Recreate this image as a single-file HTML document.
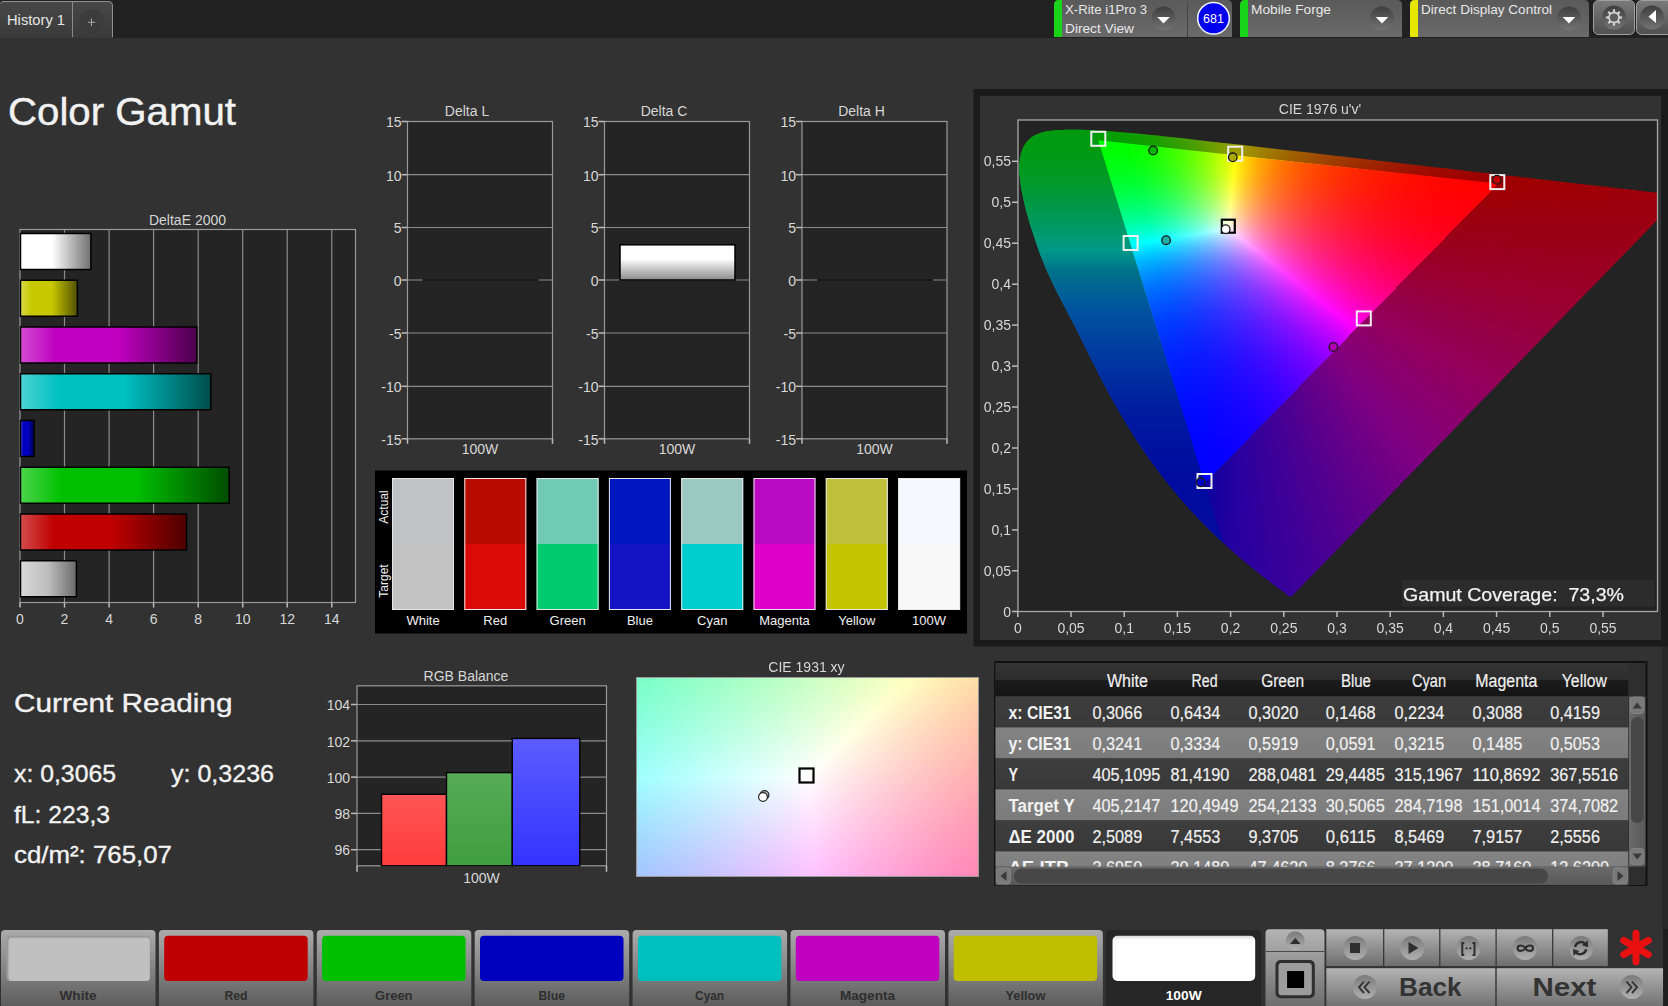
<!DOCTYPE html><html><head><meta charset="utf-8"><title>Color Gamut</title><style>html,body{margin:0;padding:0;width:1668px;height:1006px;overflow:hidden;background:#323232;font-family:"Liberation Sans",sans-serif}</style></head><body><svg width="1668" height="1006" viewBox="0 0 1668 1006" style="position:absolute;left:0;top:0;font-family:'Liberation Sans',sans-serif"><rect x="0" y="0" width="1668" height="38" fill="#212121"/><defs><linearGradient id="tabg" x1="0" y1="0" x2="0" y2="1"><stop offset="0" stop-color="#484848"/><stop offset="1" stop-color="#3a3a3a"/></linearGradient><linearGradient id="devg" x1="0" y1="0" x2="0" y2="1"><stop offset="0" stop-color="#5a5a5a"/><stop offset="1" stop-color="#6a6a6a"/></linearGradient><linearGradient id="ddg" x1="0" y1="0" x2="0" y2="1"><stop offset="0" stop-color="#3e3e3e"/><stop offset="1" stop-color="#747474"/></linearGradient><linearGradient id="btng" x1="0" y1="0" x2="0" y2="1"><stop offset="0" stop-color="#7a7a7a"/><stop offset="1" stop-color="#505050"/></linearGradient></defs><path d="M0,38 V3 L2,1 H108 Q113,1 113,6 V38 Z" fill="url(#tabg)"/><path d="M0.5,3 L2.5,1.5 H108 Q112.5,1.5 112.5,6 V37" fill="none" stroke="#909090" stroke-width="1"/><line x1="72.5" y1="2" x2="72.5" y2="37" stroke="#8a8a8a" stroke-width="1"/><text x="7" y="25" font-size="14" fill="#e6e6e6" text-anchor="start" font-weight="normal" textLength="58" lengthAdjust="spacingAndGlyphs" >History 1</text><circle cx="91.5" cy="21" r="12" fill="#3c3c3c"/><path d="M91.5,18.5 V26 M87.8,22.3 H95.2" stroke="#a8a8a8" stroke-width="1"/><path d="M1054,37 V5 Q1054,0 1059,0 H1227 Q1232,0 1232,5 V37 Z" fill="url(#devg)"/><path d="M1054,37 V5 Q1054,0 1059,0 H1062 V37 Z" fill="#19d419"/><text x="1065" y="14" font-size="13" fill="#e8e8e8" text-anchor="start" font-weight="normal" textLength="82" lengthAdjust="spacingAndGlyphs" >X-Rite i1Pro 3</text><text x="1065" y="33" font-size="13" fill="#e8e8e8" text-anchor="start" font-weight="normal" textLength="69" lengthAdjust="spacingAndGlyphs" >Direct View</text><circle cx="1163.5" cy="18.5" r="12" fill="url(#ddg)"/><path d="M1157.2,17 H1169.8 L1163.5,23.5 Z" fill="#ffffff"/><line x1="1187.5" y1="3" x2="1187.5" y2="37" stroke="#444" stroke-width="1"/><circle cx="1213.5" cy="18.3" r="15.8" fill="#0000ee" stroke="#f4f4ff" stroke-width="1.5"/><text x="1213.5" y="23" font-size="12.5" fill="#ffffff" text-anchor="middle" font-weight="normal" >681</text><path d="M1240,37 V5 Q1240,0 1245,0 H1397 Q1402,0 1402,5 V37 Z" fill="url(#devg)"/><path d="M1240,37 V5 Q1240,0 1245,0 H1248 V37 Z" fill="#19d419"/><text x="1251" y="14" font-size="13" fill="#e8e8e8" text-anchor="start" font-weight="normal" textLength="80" lengthAdjust="spacingAndGlyphs" >Mobile Forge</text><circle cx="1382" cy="18.5" r="12" fill="url(#ddg)"/><path d="M1375.7,17 H1388.3 L1382,23.5 Z" fill="#ffffff"/><path d="M1410,37 V5 Q1410,0 1415,0 H1584 Q1589,0 1589,5 V37 Z" fill="url(#devg)"/><path d="M1410,37 V5 Q1410,0 1415,0 H1418 V37 Z" fill="#e6e600"/><text x="1421" y="14" font-size="13" fill="#e8e8e8" text-anchor="start" font-weight="normal" textLength="131" lengthAdjust="spacingAndGlyphs" >Direct Display Control</text><circle cx="1569" cy="18.5" r="12" fill="url(#ddg)"/><path d="M1562.7,17 H1575.3 L1569,23.5 Z" fill="#ffffff"/><rect x="1593.5" y="0.5" width="41" height="34" rx="5" fill="url(#btng)" stroke="#a0a0a0"/><circle cx="1614" cy="17.5" r="12" fill="url(#ddg)"/><polygon points="1619.78,16.33 1622.13,16.44 1622.13,18.56 1619.78,18.67 1618.92,20.76 1620.50,22.50 1619.00,24.00 1617.26,22.42 1615.17,23.28 1615.06,25.63 1612.94,25.63 1612.83,23.28 1610.74,22.42 1609.00,24.00 1607.50,22.50 1609.08,20.76 1608.22,18.67 1605.87,18.56 1605.87,16.44 1608.22,16.33 1609.08,14.24 1607.50,12.50 1609.00,11.00 1610.74,12.58 1612.83,11.72 1612.94,9.37 1615.06,9.37 1615.17,11.72 1617.26,12.58 1619.00,11.00 1620.50,12.50 1618.92,14.24" fill="#d0d0d0"/><circle cx="1614" cy="17.5" r="4.1" fill="#5c5c5c"/><rect x="1636.5" y="0.5" width="40" height="34" rx="5" fill="url(#btng)" stroke="#a0a0a0"/><circle cx="1652" cy="17.5" r="12" fill="url(#ddg)"/><path d="M1648.5,16.8 L1656,10 V23 Z" fill="#ffffff"/><text x="8" y="124.7" font-size="38.5" fill="#f2f2f2" text-anchor="start" font-weight="normal" textLength="228" lengthAdjust="spacingAndGlyphs" stroke="#f2f2f2" stroke-width="0.4">Color Gamut</text><defs><linearGradient id="dew" x1="0" y1="0" x2="1" y2="0"><stop offset="0" stop-color="#ffffff"/><stop offset="0.45" stop-color="#ffffff"/><stop offset="1" stop-color="#707070"/></linearGradient><linearGradient id="dey" x1="0" y1="0" x2="1" y2="0"><stop offset="0" stop-color="#d8d84c"/><stop offset="0.2" stop-color="#c8c800"/><stop offset="0.55" stop-color="#c8c800"/><stop offset="1" stop-color="#505000"/></linearGradient><linearGradient id="dem" x1="0" y1="0" x2="1" y2="0"><stop offset="0" stop-color="#d34cd3"/><stop offset="0.2" stop-color="#c000c0"/><stop offset="0.55" stop-color="#c000c0"/><stop offset="1" stop-color="#4d004d"/></linearGradient><linearGradient id="dec" x1="0" y1="0" x2="1" y2="0"><stop offset="0" stop-color="#4cd3d3"/><stop offset="0.2" stop-color="#00c0c0"/><stop offset="0.55" stop-color="#00c0c0"/><stop offset="1" stop-color="#004d4d"/></linearGradient><linearGradient id="deb" x1="0" y1="0" x2="1" y2="0"><stop offset="0" stop-color="#4c4cd3"/><stop offset="0.2" stop-color="#0000c0"/><stop offset="0.55" stop-color="#0000c0"/><stop offset="1" stop-color="#00004d"/></linearGradient><linearGradient id="deg" x1="0" y1="0" x2="1" y2="0"><stop offset="0" stop-color="#4cd34c"/><stop offset="0.2" stop-color="#00c000"/><stop offset="0.55" stop-color="#00c000"/><stop offset="1" stop-color="#004d00"/></linearGradient><linearGradient id="der" x1="0" y1="0" x2="1" y2="0"><stop offset="0" stop-color="#d34c4c"/><stop offset="0.2" stop-color="#c00000"/><stop offset="0.55" stop-color="#c00000"/><stop offset="1" stop-color="#4d0000"/></linearGradient><linearGradient id="dewg" x1="0" y1="0" x2="1" y2="0"><stop offset="0" stop-color="#d8d8d8"/><stop offset="0.5" stop-color="#bdbdbd"/><stop offset="1" stop-color="#6a6a6a"/></linearGradient></defs><text x="187.5" y="225" font-size="14" fill="#d6d6d6" text-anchor="middle" font-weight="normal" >DeltaE 2000</text><rect x="20" y="229.5" width="335.5" height="373.0" fill="#242424" stroke="#999" stroke-width="1.2"/><line x1="64.5" y1="229.5" x2="64.5" y2="602.5" stroke="#8c8c8c" stroke-width="1.2"/><line x1="109.1" y1="229.5" x2="109.1" y2="602.5" stroke="#8c8c8c" stroke-width="1.2"/><line x1="153.6" y1="229.5" x2="153.6" y2="602.5" stroke="#8c8c8c" stroke-width="1.2"/><line x1="198.2" y1="229.5" x2="198.2" y2="602.5" stroke="#8c8c8c" stroke-width="1.2"/><line x1="242.7" y1="229.5" x2="242.7" y2="602.5" stroke="#8c8c8c" stroke-width="1.2"/><line x1="287.2" y1="229.5" x2="287.2" y2="602.5" stroke="#8c8c8c" stroke-width="1.2"/><line x1="331.8" y1="229.5" x2="331.8" y2="602.5" stroke="#8c8c8c" stroke-width="1.2"/><line x1="20.0" y1="602.5" x2="20.0" y2="607.5" stroke="#bbb" stroke-width="1.5"/><text x="20.0" y="624" font-size="14" fill="#d8d8d8" text-anchor="middle" font-weight="normal" >0</text><line x1="64.5" y1="602.5" x2="64.5" y2="607.5" stroke="#bbb" stroke-width="1.5"/><text x="64.5" y="624" font-size="14" fill="#d8d8d8" text-anchor="middle" font-weight="normal" >2</text><line x1="109.1" y1="602.5" x2="109.1" y2="607.5" stroke="#bbb" stroke-width="1.5"/><text x="109.1" y="624" font-size="14" fill="#d8d8d8" text-anchor="middle" font-weight="normal" >4</text><line x1="153.6" y1="602.5" x2="153.6" y2="607.5" stroke="#bbb" stroke-width="1.5"/><text x="153.6" y="624" font-size="14" fill="#d8d8d8" text-anchor="middle" font-weight="normal" >6</text><line x1="198.2" y1="602.5" x2="198.2" y2="607.5" stroke="#bbb" stroke-width="1.5"/><text x="198.2" y="624" font-size="14" fill="#d8d8d8" text-anchor="middle" font-weight="normal" >8</text><line x1="242.7" y1="602.5" x2="242.7" y2="607.5" stroke="#bbb" stroke-width="1.5"/><text x="242.7" y="624" font-size="14" fill="#d8d8d8" text-anchor="middle" font-weight="normal" >10</text><line x1="287.2" y1="602.5" x2="287.2" y2="607.5" stroke="#bbb" stroke-width="1.5"/><text x="287.2" y="624" font-size="14" fill="#d8d8d8" text-anchor="middle" font-weight="normal" >12</text><line x1="331.8" y1="602.5" x2="331.8" y2="607.5" stroke="#bbb" stroke-width="1.5"/><text x="331.8" y="624" font-size="14" fill="#d8d8d8" text-anchor="middle" font-weight="normal" >14</text><rect x="20.5" y="233.5" width="70.4" height="36" fill="url(#dew)" stroke="#000" stroke-width="1.5"/><rect x="20.5" y="280.25" width="56.9" height="36" fill="url(#dey)" stroke="#000" stroke-width="1.5"/><rect x="20.5" y="327.0" width="176.3" height="36" fill="url(#dem)" stroke="#000" stroke-width="1.5"/><rect x="20.5" y="373.75" width="190.3" height="36" fill="url(#dec)" stroke="#000" stroke-width="1.5"/><rect x="20.5" y="420.5" width="13.6" height="36" fill="url(#deb)" stroke="#000" stroke-width="1.5"/><rect x="20.5" y="467.25" width="208.7" height="36" fill="url(#deg)" stroke="#000" stroke-width="1.5"/><rect x="20.5" y="514.0" width="166.0" height="36" fill="url(#der)" stroke="#000" stroke-width="1.5"/><rect x="20.5" y="560.75" width="55.9" height="36" fill="url(#dewg)" stroke="#000" stroke-width="1.5"/><defs><linearGradient id="dcbar" x1="0" y1="0" x2="0" y2="1"><stop offset="0" stop-color="#ffffff"/><stop offset="0.4" stop-color="#ffffff"/><stop offset="1" stop-color="#8a8a8a"/></linearGradient></defs><text x="467.0" y="116" font-size="14" fill="#d6d6d6" text-anchor="middle" font-weight="normal" >Delta L</text><rect x="407.5" y="121.5" width="145" height="317.3" fill="#242424" stroke="#999" stroke-width="1.2"/><line x1="401.5" y1="121.5" x2="407.5" y2="121.5" stroke="#bbb" stroke-width="1.5"/><text x="401.5" y="127.3" font-size="14" fill="#d8d8d8" text-anchor="end" font-weight="normal" >15</text><line x1="407.5" y1="174.7" x2="552.5" y2="174.7" stroke="#8c8c8c" stroke-width="1.2"/><line x1="401.5" y1="174.7" x2="407.5" y2="174.7" stroke="#bbb" stroke-width="1.5"/><text x="401.5" y="180.5" font-size="14" fill="#d8d8d8" text-anchor="end" font-weight="normal" >10</text><line x1="407.5" y1="227.5" x2="552.5" y2="227.5" stroke="#8c8c8c" stroke-width="1.2"/><line x1="401.5" y1="227.5" x2="407.5" y2="227.5" stroke="#bbb" stroke-width="1.5"/><text x="401.5" y="233.3" font-size="14" fill="#d8d8d8" text-anchor="end" font-weight="normal" >5</text><line x1="407.5" y1="280.0" x2="552.5" y2="280.0" stroke="#8c8c8c" stroke-width="1.2"/><line x1="401.5" y1="280.0" x2="407.5" y2="280.0" stroke="#bbb" stroke-width="1.5"/><text x="401.5" y="285.8" font-size="14" fill="#d8d8d8" text-anchor="end" font-weight="normal" >0</text><line x1="407.5" y1="333.0" x2="552.5" y2="333.0" stroke="#8c8c8c" stroke-width="1.2"/><line x1="401.5" y1="333.0" x2="407.5" y2="333.0" stroke="#bbb" stroke-width="1.5"/><text x="401.5" y="338.8" font-size="14" fill="#d8d8d8" text-anchor="end" font-weight="normal" >-5</text><line x1="407.5" y1="386.3" x2="552.5" y2="386.3" stroke="#8c8c8c" stroke-width="1.2"/><line x1="401.5" y1="386.3" x2="407.5" y2="386.3" stroke="#bbb" stroke-width="1.5"/><text x="401.5" y="392.1" font-size="14" fill="#d8d8d8" text-anchor="end" font-weight="normal" >-10</text><line x1="401.5" y1="438.8" x2="407.5" y2="438.8" stroke="#bbb" stroke-width="1.5"/><text x="401.5" y="444.6" font-size="14" fill="#d8d8d8" text-anchor="end" font-weight="normal" >-15</text><line x1="407.5" y1="438.8" x2="407.5" y2="443.8" stroke="#bbb" stroke-width="1.5"/><line x1="552.5" y1="438.8" x2="552.5" y2="443.8" stroke="#bbb" stroke-width="1.5"/><text x="480.0" y="454" font-size="14" fill="#d8d8d8" text-anchor="middle" font-weight="normal" >100W</text><rect x="422.5" y="279.0" width="116" height="2" fill="#1a1a1a"/><text x="664.0" y="116" font-size="14" fill="#d6d6d6" text-anchor="middle" font-weight="normal" >Delta C</text><rect x="604.5" y="121.5" width="145" height="317.3" fill="#242424" stroke="#999" stroke-width="1.2"/><line x1="598.5" y1="121.5" x2="604.5" y2="121.5" stroke="#bbb" stroke-width="1.5"/><text x="598.5" y="127.3" font-size="14" fill="#d8d8d8" text-anchor="end" font-weight="normal" >15</text><line x1="604.5" y1="174.7" x2="749.5" y2="174.7" stroke="#8c8c8c" stroke-width="1.2"/><line x1="598.5" y1="174.7" x2="604.5" y2="174.7" stroke="#bbb" stroke-width="1.5"/><text x="598.5" y="180.5" font-size="14" fill="#d8d8d8" text-anchor="end" font-weight="normal" >10</text><line x1="604.5" y1="227.5" x2="749.5" y2="227.5" stroke="#8c8c8c" stroke-width="1.2"/><line x1="598.5" y1="227.5" x2="604.5" y2="227.5" stroke="#bbb" stroke-width="1.5"/><text x="598.5" y="233.3" font-size="14" fill="#d8d8d8" text-anchor="end" font-weight="normal" >5</text><line x1="604.5" y1="280.0" x2="749.5" y2="280.0" stroke="#8c8c8c" stroke-width="1.2"/><line x1="598.5" y1="280.0" x2="604.5" y2="280.0" stroke="#bbb" stroke-width="1.5"/><text x="598.5" y="285.8" font-size="14" fill="#d8d8d8" text-anchor="end" font-weight="normal" >0</text><line x1="604.5" y1="333.0" x2="749.5" y2="333.0" stroke="#8c8c8c" stroke-width="1.2"/><line x1="598.5" y1="333.0" x2="604.5" y2="333.0" stroke="#bbb" stroke-width="1.5"/><text x="598.5" y="338.8" font-size="14" fill="#d8d8d8" text-anchor="end" font-weight="normal" >-5</text><line x1="604.5" y1="386.3" x2="749.5" y2="386.3" stroke="#8c8c8c" stroke-width="1.2"/><line x1="598.5" y1="386.3" x2="604.5" y2="386.3" stroke="#bbb" stroke-width="1.5"/><text x="598.5" y="392.1" font-size="14" fill="#d8d8d8" text-anchor="end" font-weight="normal" >-10</text><line x1="598.5" y1="438.8" x2="604.5" y2="438.8" stroke="#bbb" stroke-width="1.5"/><text x="598.5" y="444.6" font-size="14" fill="#d8d8d8" text-anchor="end" font-weight="normal" >-15</text><line x1="604.5" y1="438.8" x2="604.5" y2="443.8" stroke="#bbb" stroke-width="1.5"/><line x1="749.5" y1="438.8" x2="749.5" y2="443.8" stroke="#bbb" stroke-width="1.5"/><text x="677.0" y="454" font-size="14" fill="#d8d8d8" text-anchor="middle" font-weight="normal" >100W</text><rect x="620.0" y="244.8" width="115" height="35.2" fill="url(#dcbar)" stroke="#000" stroke-width="1.5"/><text x="861.5" y="116" font-size="14" fill="#d6d6d6" text-anchor="middle" font-weight="normal" >Delta H</text><rect x="802" y="121.5" width="145" height="317.3" fill="#242424" stroke="#999" stroke-width="1.2"/><line x1="796" y1="121.5" x2="802" y2="121.5" stroke="#bbb" stroke-width="1.5"/><text x="796" y="127.3" font-size="14" fill="#d8d8d8" text-anchor="end" font-weight="normal" >15</text><line x1="802" y1="174.7" x2="947" y2="174.7" stroke="#8c8c8c" stroke-width="1.2"/><line x1="796" y1="174.7" x2="802" y2="174.7" stroke="#bbb" stroke-width="1.5"/><text x="796" y="180.5" font-size="14" fill="#d8d8d8" text-anchor="end" font-weight="normal" >10</text><line x1="802" y1="227.5" x2="947" y2="227.5" stroke="#8c8c8c" stroke-width="1.2"/><line x1="796" y1="227.5" x2="802" y2="227.5" stroke="#bbb" stroke-width="1.5"/><text x="796" y="233.3" font-size="14" fill="#d8d8d8" text-anchor="end" font-weight="normal" >5</text><line x1="802" y1="280.0" x2="947" y2="280.0" stroke="#8c8c8c" stroke-width="1.2"/><line x1="796" y1="280.0" x2="802" y2="280.0" stroke="#bbb" stroke-width="1.5"/><text x="796" y="285.8" font-size="14" fill="#d8d8d8" text-anchor="end" font-weight="normal" >0</text><line x1="802" y1="333.0" x2="947" y2="333.0" stroke="#8c8c8c" stroke-width="1.2"/><line x1="796" y1="333.0" x2="802" y2="333.0" stroke="#bbb" stroke-width="1.5"/><text x="796" y="338.8" font-size="14" fill="#d8d8d8" text-anchor="end" font-weight="normal" >-5</text><line x1="802" y1="386.3" x2="947" y2="386.3" stroke="#8c8c8c" stroke-width="1.2"/><line x1="796" y1="386.3" x2="802" y2="386.3" stroke="#bbb" stroke-width="1.5"/><text x="796" y="392.1" font-size="14" fill="#d8d8d8" text-anchor="end" font-weight="normal" >-10</text><line x1="796" y1="438.8" x2="802" y2="438.8" stroke="#bbb" stroke-width="1.5"/><text x="796" y="444.6" font-size="14" fill="#d8d8d8" text-anchor="end" font-weight="normal" >-15</text><line x1="802" y1="438.8" x2="802" y2="443.8" stroke="#bbb" stroke-width="1.5"/><line x1="947" y1="438.8" x2="947" y2="443.8" stroke="#bbb" stroke-width="1.5"/><text x="874.5" y="454" font-size="14" fill="#d8d8d8" text-anchor="middle" font-weight="normal" >100W</text><rect x="817" y="279.0" width="116" height="2" fill="#1a1a1a"/><rect x="375" y="470.5" width="592" height="163" fill="#000"/><rect x="392.0" y="478" width="62" height="66" fill="#c0c2c6"/><rect x="392.0" y="544" width="62" height="66" fill="#c2c2c2"/><rect x="392.5" y="478.5" width="61" height="131" fill="none" stroke="#e8e8e8" stroke-width="1"/><text x="423.0" y="625" font-size="13" fill="#f0f0f0" text-anchor="middle" font-weight="normal" >White</text><rect x="464.3" y="478" width="62" height="66" fill="#b90c00"/><rect x="464.3" y="544" width="62" height="66" fill="#dc0909"/><rect x="464.8" y="478.5" width="61" height="131" fill="none" stroke="#e8e8e8" stroke-width="1"/><text x="495.3" y="625" font-size="13" fill="#f0f0f0" text-anchor="middle" font-weight="normal" >Red</text><rect x="536.6" y="478" width="62" height="66" fill="#70cab4"/><rect x="536.6" y="544" width="62" height="66" fill="#00cc6e"/><rect x="537.1" y="478.5" width="61" height="131" fill="none" stroke="#e8e8e8" stroke-width="1"/><text x="567.6" y="625" font-size="13" fill="#f0f0f0" text-anchor="middle" font-weight="normal" >Green</text><rect x="608.9" y="478" width="62" height="66" fill="#0016c0"/><rect x="608.9" y="544" width="62" height="66" fill="#1414c4"/><rect x="609.4" y="478.5" width="61" height="131" fill="none" stroke="#e8e8e8" stroke-width="1"/><text x="639.9" y="625" font-size="13" fill="#f0f0f0" text-anchor="middle" font-weight="normal" >Blue</text><rect x="681.2" y="478" width="62" height="66" fill="#9cc8c2"/><rect x="681.2" y="544" width="62" height="66" fill="#00cece"/><rect x="681.7" y="478.5" width="61" height="131" fill="none" stroke="#e8e8e8" stroke-width="1"/><text x="712.2" y="625" font-size="13" fill="#f0f0f0" text-anchor="middle" font-weight="normal" >Cyan</text><rect x="753.5" y="478" width="62" height="66" fill="#b90bc3"/><rect x="753.5" y="544" width="62" height="66" fill="#dd00c9"/><rect x="754.0" y="478.5" width="61" height="131" fill="none" stroke="#e8e8e8" stroke-width="1"/><text x="784.5" y="625" font-size="13" fill="#f0f0f0" text-anchor="middle" font-weight="normal" >Magenta</text><rect x="825.8" y="478" width="62" height="66" fill="#c0c03a"/><rect x="825.8" y="544" width="62" height="66" fill="#c4c400"/><rect x="826.3" y="478.5" width="61" height="131" fill="none" stroke="#e8e8e8" stroke-width="1"/><text x="856.8" y="625" font-size="13" fill="#f0f0f0" text-anchor="middle" font-weight="normal" >Yellow</text><rect x="898.1" y="478" width="62" height="66" fill="#f5f8fe"/><rect x="898.1" y="544" width="62" height="66" fill="#f8f8f8"/><rect x="898.6" y="478.5" width="61" height="131" fill="none" stroke="#e8e8e8" stroke-width="1"/><text x="929.1" y="625" font-size="13" fill="#f0f0f0" text-anchor="middle" font-weight="normal" >100W</text><text x="0" y="0" font-size="12" fill="#f0f0f0" text-anchor="middle" font-weight="normal" transform="translate(387.5,507) rotate(-90)">Actual</text><text x="0" y="0" font-size="12" fill="#f0f0f0" text-anchor="middle" font-weight="normal" transform="translate(387.5,581) rotate(-90)">Target</text><rect x="1662" y="640" width="6" height="290" fill="#282828"/><rect x="973.5" y="89" width="700" height="557.5" fill="#1b1b1b"/><rect x="980" y="96" width="681" height="544" fill="#323232"/><rect x="1018" y="120" width="639.5" height="491.5" fill="#232323"/><text x="14" y="712.2" font-size="26" fill="#f2f2f2" text-anchor="start" font-weight="normal" textLength="218.5" lengthAdjust="spacingAndGlyphs" stroke="#f2f2f2" stroke-width="0.35">Current Reading</text><text x="14" y="782.4" font-size="24" fill="#f2f2f2" text-anchor="start" font-weight="normal" textLength="102" lengthAdjust="spacingAndGlyphs" stroke="#f2f2f2" stroke-width="0.35">x: 0,3065</text><text x="171" y="782.4" font-size="24" fill="#f2f2f2" text-anchor="start" font-weight="normal" textLength="103" lengthAdjust="spacingAndGlyphs" stroke="#f2f2f2" stroke-width="0.35">y: 0,3236</text><text x="14" y="823" font-size="24" fill="#f2f2f2" text-anchor="start" font-weight="normal" textLength="96" lengthAdjust="spacingAndGlyphs" stroke="#f2f2f2" stroke-width="0.35">fL: 223,3</text><text x="14" y="862.9" font-size="24" fill="#f2f2f2" text-anchor="start" font-weight="normal" textLength="158" lengthAdjust="spacingAndGlyphs" stroke="#f2f2f2" stroke-width="0.35">cd/m&#178;: 765,07</text><defs><linearGradient id="rbR" x1="0" y1="0" x2="0" y2="1"><stop offset="0" stop-color="#ff5555"/><stop offset="1" stop-color="#ff3c3c"/></linearGradient><linearGradient id="rbG" x1="0" y1="0" x2="0" y2="1"><stop offset="0" stop-color="#58ab58"/><stop offset="1" stop-color="#3e9e3e"/></linearGradient><linearGradient id="rbB" x1="0" y1="0" x2="0" y2="1"><stop offset="0" stop-color="#5c5cff"/><stop offset="1" stop-color="#3333ff"/></linearGradient></defs><text x="466" y="681" font-size="14" fill="#d6d6d6" text-anchor="middle" font-weight="normal" >RGB Balance</text><rect x="357" y="685.8" width="249.5" height="180.0" fill="#242424" stroke="#999" stroke-width="1.2"/><line x1="357" y1="704.5" x2="606.5" y2="704.5" stroke="#8c8c8c" stroke-width="1.2"/><line x1="351" y1="704.5" x2="357" y2="704.5" stroke="#bbb" stroke-width="1.5"/><text x="350" y="710.2" font-size="14" fill="#d8d8d8" text-anchor="end" font-weight="normal" >104</text><line x1="357" y1="740.8" x2="606.5" y2="740.8" stroke="#8c8c8c" stroke-width="1.2"/><line x1="351" y1="740.8" x2="357" y2="740.8" stroke="#bbb" stroke-width="1.5"/><text x="350" y="746.5" font-size="14" fill="#d8d8d8" text-anchor="end" font-weight="normal" >102</text><line x1="357" y1="777.1" x2="606.5" y2="777.1" stroke="#8c8c8c" stroke-width="1.2"/><line x1="351" y1="777.1" x2="357" y2="777.1" stroke="#bbb" stroke-width="1.5"/><text x="350" y="782.8" font-size="14" fill="#d8d8d8" text-anchor="end" font-weight="normal" >100</text><line x1="357" y1="813.4" x2="606.5" y2="813.4" stroke="#8c8c8c" stroke-width="1.2"/><line x1="351" y1="813.4" x2="357" y2="813.4" stroke="#bbb" stroke-width="1.5"/><text x="350" y="819.1" font-size="14" fill="#d8d8d8" text-anchor="end" font-weight="normal" >98</text><line x1="357" y1="849.7" x2="606.5" y2="849.7" stroke="#8c8c8c" stroke-width="1.2"/><line x1="351" y1="849.7" x2="357" y2="849.7" stroke="#bbb" stroke-width="1.5"/><text x="350" y="855.4" font-size="14" fill="#d8d8d8" text-anchor="end" font-weight="normal" >96</text><line x1="357" y1="865.8" x2="357" y2="871.8" stroke="#bbb" stroke-width="1.5"/><line x1="606.5" y1="865.8" x2="606.5" y2="871.8" stroke="#bbb" stroke-width="1.5"/><rect x="381.5" y="794.3" width="65.0" height="71.5" fill="url(#rbR)" stroke="#000" stroke-width="1.4"/><rect x="446.5" y="772.6" width="65.8" height="93.2" fill="url(#rbG)" stroke="#000" stroke-width="1.4"/><rect x="512.3" y="738.4" width="67.5" height="127.4" fill="url(#rbB)" stroke="#000" stroke-width="1.4"/><text x="481.5" y="883" font-size="14" fill="#d8d8d8" text-anchor="middle" font-weight="normal" >100W</text><defs><linearGradient id="rowD" x1="0" y1="0" x2="0" y2="1"><stop offset="0" stop-color="#3e3e3e"/><stop offset="1" stop-color="#383838"/></linearGradient><linearGradient id="rowL" x1="0" y1="0" x2="0" y2="1"><stop offset="0" stop-color="#838383"/><stop offset="1" stop-color="#7b7b7b"/></linearGradient><linearGradient id="hdr" x1="0" y1="0" x2="0" y2="1"><stop offset="0" stop-color="#353535"/><stop offset="0.5" stop-color="#2c2c2c"/><stop offset="0.52" stop-color="#1c1c1c"/><stop offset="1" stop-color="#141414"/></linearGradient><linearGradient id="sbv" x1="0" y1="0" x2="1" y2="0"><stop offset="0" stop-color="#6a6a6a"/><stop offset="1" stop-color="#585858"/></linearGradient><linearGradient id="sbh" x1="0" y1="0" x2="0" y2="1"><stop offset="0" stop-color="#6a6a6a"/><stop offset="1" stop-color="#585858"/></linearGradient><clipPath id="tclip"><rect x="995" y="663" width="633.5" height="203.8"/></clipPath></defs><rect x="994" y="661" width="653.5" height="225" fill="#111"/><rect x="995.5" y="663" width="650" height="222" fill="#2e2e2e"/><g clip-path="url(#tclip)"><rect x="995.5" y="663" width="633" height="33.4" fill="url(#hdr)"/><text x="1127.4" y="686.5" font-size="18" fill="#f0f0f0" text-anchor="middle" font-weight="normal" textLength="41" lengthAdjust="spacingAndGlyphs" stroke="#f0f0f0" stroke-width="0.2">White</text><text x="1204.6" y="686.5" font-size="18" fill="#f0f0f0" text-anchor="middle" font-weight="normal" textLength="26" lengthAdjust="spacingAndGlyphs" stroke="#f0f0f0" stroke-width="0.2">Red</text><text x="1282.7" y="686.5" font-size="18" fill="#f0f0f0" text-anchor="middle" font-weight="normal" textLength="43" lengthAdjust="spacingAndGlyphs" stroke="#f0f0f0" stroke-width="0.2">Green</text><text x="1355.9" y="686.5" font-size="18" fill="#f0f0f0" text-anchor="middle" font-weight="normal" textLength="30" lengthAdjust="spacingAndGlyphs" stroke="#f0f0f0" stroke-width="0.2">Blue</text><text x="1429" y="686.5" font-size="18" fill="#f0f0f0" text-anchor="middle" font-weight="normal" textLength="34" lengthAdjust="spacingAndGlyphs" stroke="#f0f0f0" stroke-width="0.2">Cyan</text><text x="1506.3" y="686.5" font-size="18" fill="#f0f0f0" text-anchor="middle" font-weight="normal" textLength="62" lengthAdjust="spacingAndGlyphs" stroke="#f0f0f0" stroke-width="0.2">Magenta</text><text x="1584.3" y="686.5" font-size="18" fill="#f0f0f0" text-anchor="middle" font-weight="normal" textLength="45" lengthAdjust="spacingAndGlyphs" stroke="#f0f0f0" stroke-width="0.2">Yellow</text><rect x="995.5" y="696.4" width="633" height="31" fill="url(#rowD)"/><text x="1008.4" y="718.7" font-size="18" fill="#f2f2f2" text-anchor="start" font-weight="bold" textLength="62.6" lengthAdjust="spacingAndGlyphs" >x: CIE31</text><text x="1092.4" y="718.7" font-size="18" fill="#f0f0f0" text-anchor="start" font-weight="normal" textLength="49.8" lengthAdjust="spacingAndGlyphs" stroke="#f0f0f0" stroke-width="0.2">0,3066</text><text x="1170.5" y="718.7" font-size="18" fill="#f0f0f0" text-anchor="start" font-weight="normal" textLength="49.8" lengthAdjust="spacingAndGlyphs" stroke="#f0f0f0" stroke-width="0.2">0,6434</text><text x="1248.5" y="718.7" font-size="18" fill="#f0f0f0" text-anchor="start" font-weight="normal" textLength="49.8" lengthAdjust="spacingAndGlyphs" stroke="#f0f0f0" stroke-width="0.2">0,3020</text><text x="1325.8" y="718.7" font-size="18" fill="#f0f0f0" text-anchor="start" font-weight="normal" textLength="49.8" lengthAdjust="spacingAndGlyphs" stroke="#f0f0f0" stroke-width="0.2">0,1468</text><text x="1394.5" y="718.7" font-size="18" fill="#f0f0f0" text-anchor="start" font-weight="normal" textLength="49.8" lengthAdjust="spacingAndGlyphs" stroke="#f0f0f0" stroke-width="0.2">0,2234</text><text x="1472.5" y="718.7" font-size="18" fill="#f0f0f0" text-anchor="start" font-weight="normal" textLength="49.8" lengthAdjust="spacingAndGlyphs" stroke="#f0f0f0" stroke-width="0.2">0,3088</text><text x="1550.2" y="718.7" font-size="18" fill="#f0f0f0" text-anchor="start" font-weight="normal" textLength="49.8" lengthAdjust="spacingAndGlyphs" stroke="#f0f0f0" stroke-width="0.2">0,4159</text><rect x="995.5" y="727.4" width="633" height="31" fill="url(#rowL)"/><text x="1008.4" y="749.7" font-size="18" fill="#f2f2f2" text-anchor="start" font-weight="bold" textLength="62.6" lengthAdjust="spacingAndGlyphs" >y: CIE31</text><text x="1092.4" y="749.7" font-size="18" fill="#f0f0f0" text-anchor="start" font-weight="normal" textLength="49.8" lengthAdjust="spacingAndGlyphs" stroke="#f0f0f0" stroke-width="0.2">0,3241</text><text x="1170.5" y="749.7" font-size="18" fill="#f0f0f0" text-anchor="start" font-weight="normal" textLength="49.8" lengthAdjust="spacingAndGlyphs" stroke="#f0f0f0" stroke-width="0.2">0,3334</text><text x="1248.5" y="749.7" font-size="18" fill="#f0f0f0" text-anchor="start" font-weight="normal" textLength="49.8" lengthAdjust="spacingAndGlyphs" stroke="#f0f0f0" stroke-width="0.2">0,5919</text><text x="1325.8" y="749.7" font-size="18" fill="#f0f0f0" text-anchor="start" font-weight="normal" textLength="49.8" lengthAdjust="spacingAndGlyphs" stroke="#f0f0f0" stroke-width="0.2">0,0591</text><text x="1394.5" y="749.7" font-size="18" fill="#f0f0f0" text-anchor="start" font-weight="normal" textLength="49.8" lengthAdjust="spacingAndGlyphs" stroke="#f0f0f0" stroke-width="0.2">0,3215</text><text x="1472.5" y="749.7" font-size="18" fill="#f0f0f0" text-anchor="start" font-weight="normal" textLength="49.8" lengthAdjust="spacingAndGlyphs" stroke="#f0f0f0" stroke-width="0.2">0,1485</text><text x="1550.2" y="749.7" font-size="18" fill="#f0f0f0" text-anchor="start" font-weight="normal" textLength="49.8" lengthAdjust="spacingAndGlyphs" stroke="#f0f0f0" stroke-width="0.2">0,5053</text><rect x="995.5" y="758.4" width="633" height="31" fill="url(#rowD)"/><text x="1008.4" y="780.7" font-size="18" fill="#f2f2f2" text-anchor="start" font-weight="bold" textLength="9.5" lengthAdjust="spacingAndGlyphs" >Y</text><text x="1092.4" y="780.7" font-size="18" fill="#f0f0f0" text-anchor="start" font-weight="normal" textLength="68.0" lengthAdjust="spacingAndGlyphs" stroke="#f0f0f0" stroke-width="0.2">405,1095</text><text x="1170.5" y="780.7" font-size="18" fill="#f0f0f0" text-anchor="start" font-weight="normal" textLength="58.9" lengthAdjust="spacingAndGlyphs" stroke="#f0f0f0" stroke-width="0.2">81,4190</text><text x="1248.5" y="780.7" font-size="18" fill="#f0f0f0" text-anchor="start" font-weight="normal" textLength="68.0" lengthAdjust="spacingAndGlyphs" stroke="#f0f0f0" stroke-width="0.2">288,0481</text><text x="1325.8" y="780.7" font-size="18" fill="#f0f0f0" text-anchor="start" font-weight="normal" textLength="58.9" lengthAdjust="spacingAndGlyphs" stroke="#f0f0f0" stroke-width="0.2">29,4485</text><text x="1394.5" y="780.7" font-size="18" fill="#f0f0f0" text-anchor="start" font-weight="normal" textLength="68.0" lengthAdjust="spacingAndGlyphs" stroke="#f0f0f0" stroke-width="0.2">315,1967</text><text x="1472.5" y="780.7" font-size="18" fill="#f0f0f0" text-anchor="start" font-weight="normal" textLength="68.0" lengthAdjust="spacingAndGlyphs" stroke="#f0f0f0" stroke-width="0.2">110,8692</text><text x="1550.2" y="780.7" font-size="18" fill="#f0f0f0" text-anchor="start" font-weight="normal" textLength="68.0" lengthAdjust="spacingAndGlyphs" stroke="#f0f0f0" stroke-width="0.2">367,5516</text><rect x="995.5" y="789.4" width="633" height="31" fill="url(#rowL)"/><text x="1008.4" y="811.7" font-size="18" fill="#f2f2f2" text-anchor="start" font-weight="bold" textLength="66.3" lengthAdjust="spacingAndGlyphs" >Target Y</text><text x="1092.4" y="811.7" font-size="18" fill="#f0f0f0" text-anchor="start" font-weight="normal" textLength="68.0" lengthAdjust="spacingAndGlyphs" stroke="#f0f0f0" stroke-width="0.2">405,2147</text><text x="1170.5" y="811.7" font-size="18" fill="#f0f0f0" text-anchor="start" font-weight="normal" textLength="68.0" lengthAdjust="spacingAndGlyphs" stroke="#f0f0f0" stroke-width="0.2">120,4949</text><text x="1248.5" y="811.7" font-size="18" fill="#f0f0f0" text-anchor="start" font-weight="normal" textLength="68.0" lengthAdjust="spacingAndGlyphs" stroke="#f0f0f0" stroke-width="0.2">254,2133</text><text x="1325.8" y="811.7" font-size="18" fill="#f0f0f0" text-anchor="start" font-weight="normal" textLength="58.9" lengthAdjust="spacingAndGlyphs" stroke="#f0f0f0" stroke-width="0.2">30,5065</text><text x="1394.5" y="811.7" font-size="18" fill="#f0f0f0" text-anchor="start" font-weight="normal" textLength="68.0" lengthAdjust="spacingAndGlyphs" stroke="#f0f0f0" stroke-width="0.2">284,7198</text><text x="1472.5" y="811.7" font-size="18" fill="#f0f0f0" text-anchor="start" font-weight="normal" textLength="68.0" lengthAdjust="spacingAndGlyphs" stroke="#f0f0f0" stroke-width="0.2">151,0014</text><text x="1550.2" y="811.7" font-size="18" fill="#f0f0f0" text-anchor="start" font-weight="normal" textLength="68.0" lengthAdjust="spacingAndGlyphs" stroke="#f0f0f0" stroke-width="0.2">374,7082</text><rect x="995.5" y="820.4" width="633" height="31" fill="url(#rowD)"/><text x="1008.4" y="842.7" font-size="18" fill="#f2f2f2" text-anchor="start" font-weight="bold" textLength="66" lengthAdjust="spacingAndGlyphs" >&#916;E 2000</text><text x="1092.4" y="842.7" font-size="18" fill="#f0f0f0" text-anchor="start" font-weight="normal" textLength="49.8" lengthAdjust="spacingAndGlyphs" stroke="#f0f0f0" stroke-width="0.2">2,5089</text><text x="1170.5" y="842.7" font-size="18" fill="#f0f0f0" text-anchor="start" font-weight="normal" textLength="49.8" lengthAdjust="spacingAndGlyphs" stroke="#f0f0f0" stroke-width="0.2">7,4553</text><text x="1248.5" y="842.7" font-size="18" fill="#f0f0f0" text-anchor="start" font-weight="normal" textLength="49.8" lengthAdjust="spacingAndGlyphs" stroke="#f0f0f0" stroke-width="0.2">9,3705</text><text x="1325.8" y="842.7" font-size="18" fill="#f0f0f0" text-anchor="start" font-weight="normal" textLength="49.8" lengthAdjust="spacingAndGlyphs" stroke="#f0f0f0" stroke-width="0.2">0,6115</text><text x="1394.5" y="842.7" font-size="18" fill="#f0f0f0" text-anchor="start" font-weight="normal" textLength="49.8" lengthAdjust="spacingAndGlyphs" stroke="#f0f0f0" stroke-width="0.2">8,5469</text><text x="1472.5" y="842.7" font-size="18" fill="#f0f0f0" text-anchor="start" font-weight="normal" textLength="49.8" lengthAdjust="spacingAndGlyphs" stroke="#f0f0f0" stroke-width="0.2">7,9157</text><text x="1550.2" y="842.7" font-size="18" fill="#f0f0f0" text-anchor="start" font-weight="normal" textLength="49.8" lengthAdjust="spacingAndGlyphs" stroke="#f0f0f0" stroke-width="0.2">2,5556</text><rect x="995.5" y="851.4" width="633" height="31" fill="url(#rowL)"/><text x="1008.4" y="873.7" font-size="18" fill="#f2f2f2" text-anchor="start" font-weight="bold" textLength="60" lengthAdjust="spacingAndGlyphs" >&#916;E ITP</text><text x="1092.4" y="873.7" font-size="18" fill="#f0f0f0" text-anchor="start" font-weight="normal" textLength="49.8" lengthAdjust="spacingAndGlyphs" stroke="#f0f0f0" stroke-width="0.2">3,6950</text><text x="1170.5" y="873.7" font-size="18" fill="#f0f0f0" text-anchor="start" font-weight="normal" textLength="58.9" lengthAdjust="spacingAndGlyphs" stroke="#f0f0f0" stroke-width="0.2">20,1480</text><text x="1248.5" y="873.7" font-size="18" fill="#f0f0f0" text-anchor="start" font-weight="normal" textLength="58.9" lengthAdjust="spacingAndGlyphs" stroke="#f0f0f0" stroke-width="0.2">47,4620</text><text x="1325.8" y="873.7" font-size="18" fill="#f0f0f0" text-anchor="start" font-weight="normal" textLength="49.8" lengthAdjust="spacingAndGlyphs" stroke="#f0f0f0" stroke-width="0.2">8,3766</text><text x="1394.5" y="873.7" font-size="18" fill="#f0f0f0" text-anchor="start" font-weight="normal" textLength="58.9" lengthAdjust="spacingAndGlyphs" stroke="#f0f0f0" stroke-width="0.2">37,1200</text><text x="1472.5" y="873.7" font-size="18" fill="#f0f0f0" text-anchor="start" font-weight="normal" textLength="58.9" lengthAdjust="spacingAndGlyphs" stroke="#f0f0f0" stroke-width="0.2">38,7160</text><text x="1550.2" y="873.7" font-size="18" fill="#f0f0f0" text-anchor="start" font-weight="normal" textLength="58.9" lengthAdjust="spacingAndGlyphs" stroke="#f0f0f0" stroke-width="0.2">13,6200</text></g><rect x="1629" y="696.5" width="16.5" height="170" fill="url(#sbv)"/><rect x="1630.5" y="697" width="13.5" height="16.5" rx="3" fill="#7a7a7a" stroke="#888" stroke-width="0.8"/><path d="M1632.5,708.5 L1637.2,702.5 L1642,708.5 Z" fill="#3a3a3a"/><rect x="1631" y="717" width="12.5" height="106" rx="6" fill="#474747"/><rect x="1630.5" y="848.5" width="13.5" height="16" rx="3" fill="#7a7a7a" stroke="#888" stroke-width="0.8"/><path d="M1632.5,853.5 L1642,853.5 L1637.2,859.5 Z" fill="#3a3a3a"/><rect x="995.5" y="866.8" width="633" height="18.5" fill="url(#sbh)"/><rect x="996.5" y="868" width="14" height="16" rx="3" fill="#7a7a7a" stroke="#888" stroke-width="0.8"/><path d="M1006.5,871 L1000.5,876 L1006.5,881 Z" fill="#3a3a3a"/><rect x="1014" y="868.5" width="534" height="15" rx="7.5" fill="#474747"/><rect x="1613" y="868" width="14.5" height="16" rx="3" fill="#7a7a7a" stroke="#888" stroke-width="0.8"/><path d="M1617.5,871 L1623.5,876 L1617.5,881 Z" fill="#3a3a3a"/><defs><linearGradient id="bb" x1="0" y1="0" x2="0" y2="1"><stop offset="0" stop-color="#ababab"/><stop offset="0.6" stop-color="#7e7e7e"/><stop offset="1" stop-color="#5c5c5c"/></linearGradient><linearGradient id="cb" x1="0" y1="0" x2="0" y2="1"><stop offset="0" stop-color="#b4b4b4"/><stop offset="1" stop-color="#6e6e6e"/></linearGradient><radialGradient id="ic" cx="0.5" cy="0.35" r="0.6"><stop offset="0" stop-color="#6a6a6a"/><stop offset="1" stop-color="#a8a8a8"/></radialGradient><linearGradient id="icg" x1="0" y1="0" x2="0" y2="1"><stop offset="0" stop-color="#7a7a7a"/><stop offset="1" stop-color="#b0b0b0"/></linearGradient></defs><path d="M1.0,1006 V934 Q1.0,930 5.0,930 H151.5 Q155.5,930 155.5,934 V1006 Z" fill="url(#bb)"/><rect x="6.3" y="935.7" width="143.5" height="45.3" rx="4" fill="#9a9a9a"/><rect x="8.5" y="937.7" width="141.3" height="43.3" rx="3.5" fill="#c0c0c0"/><text x="78.0" y="1000" font-size="13.5" fill="#2e2e2e" text-anchor="middle" font-weight="bold" textLength="37" lengthAdjust="spacingAndGlyphs" >White</text><path d="M158.9,1006 V934 Q158.9,930 162.9,930 H309.4 Q313.4,930 313.4,934 V1006 Z" fill="url(#bb)"/><rect x="164.2" y="935.7" width="143.5" height="45.3" rx="4" fill="#bf0000"/><text x="235.9" y="1000" font-size="13.5" fill="#2e2e2e" text-anchor="middle" font-weight="bold" textLength="23" lengthAdjust="spacingAndGlyphs" >Red</text><path d="M316.8,1006 V934 Q316.8,930 320.8,930 H467.3 Q471.3,930 471.3,934 V1006 Z" fill="url(#bb)"/><rect x="322.1" y="935.7" width="143.5" height="45.3" rx="4" fill="#00bf00"/><text x="393.8" y="1000" font-size="13.5" fill="#2e2e2e" text-anchor="middle" font-weight="bold" textLength="37.5" lengthAdjust="spacingAndGlyphs" >Green</text><path d="M474.7,1006 V934 Q474.7,930 478.7,930 H625.2 Q629.2,930 629.2,934 V1006 Z" fill="url(#bb)"/><rect x="480.0" y="935.7" width="143.5" height="45.3" rx="4" fill="#0000bf"/><text x="551.7" y="1000" font-size="13.5" fill="#2e2e2e" text-anchor="middle" font-weight="bold" textLength="26.5" lengthAdjust="spacingAndGlyphs" >Blue</text><path d="M632.6,1006 V934 Q632.6,930 636.6,930 H783.1 Q787.1,930 787.1,934 V1006 Z" fill="url(#bb)"/><rect x="637.9" y="935.7" width="143.5" height="45.3" rx="4" fill="#00bfbf"/><text x="709.6" y="1000" font-size="13.5" fill="#2e2e2e" text-anchor="middle" font-weight="bold" textLength="29" lengthAdjust="spacingAndGlyphs" >Cyan</text><path d="M790.5,1006 V934 Q790.5,930 794.5,930 H941.0 Q945.0,930 945.0,934 V1006 Z" fill="url(#bb)"/><rect x="795.8" y="935.7" width="143.5" height="45.3" rx="4" fill="#bf00bf"/><text x="867.5" y="1000" font-size="13.5" fill="#2e2e2e" text-anchor="middle" font-weight="bold" textLength="55" lengthAdjust="spacingAndGlyphs" >Magenta</text><path d="M948.4,1006 V934 Q948.4,930 952.4,930 H1098.9 Q1102.9,930 1102.9,934 V1006 Z" fill="url(#bb)"/><rect x="953.7" y="935.7" width="143.5" height="45.3" rx="4" fill="#bfbf00"/><text x="1025.4" y="1000" font-size="13.5" fill="#2e2e2e" text-anchor="middle" font-weight="bold" textLength="40" lengthAdjust="spacingAndGlyphs" >Yellow</text><path d="M1106,1006 V934 Q1106,930 1110,930 H1257 Q1261,930 1261,934 V1006 Z" fill="#262626"/><defs><linearGradient id="w100" x1="0" y1="0" x2="0" y2="1"><stop offset="0" stop-color="#d8d8d8"/><stop offset="0.1" stop-color="#ffffff"/><stop offset="1" stop-color="#ffffff"/></linearGradient></defs><rect x="1112.5" y="935.7" width="142.7" height="45.3" rx="5" fill="url(#w100)"/><text x="1183.7" y="1000" font-size="13.5" fill="#ffffff" text-anchor="middle" font-weight="bold" textLength="36" lengthAdjust="spacingAndGlyphs" >100W</text><path d="M1265.5,1006 V933 Q1265.5,929.2 1269.5,929.2 H1320.5 Q1324.5,929.2 1324.5,933 V1006 Z" fill="url(#cb)"/><line x1="1265.5" y1="951.5" x2="1324.5" y2="951.5" stroke="#4a4a4a" stroke-width="1.2"/><circle cx="1295.3" cy="940.8" r="9.5" fill="url(#icg)"/><path d="M1290,944 L1295.3,938 L1300.6,944 Z" fill="#2e2e2e"/><rect x="1275.5" y="960" width="39.3" height="38.3" rx="5" fill="#2e2e2e"/><rect x="1278.5" y="963" width="33.3" height="32.3" rx="3" fill="#9c9c9c"/><rect x="1287.1" y="971" width="17" height="17" fill="#000"/><rect x="1326.3" y="929.2" width="56.8" height="36.9" fill="url(#cb)"/><circle cx="1355.3" cy="948" r="12" fill="url(#icg)"/><rect x="1384.3" y="929.2" width="54.9" height="36.9" fill="url(#cb)"/><circle cx="1412.3" cy="948" r="12" fill="url(#icg)"/><rect x="1440.4" y="929.2" width="55.1" height="36.9" fill="url(#cb)"/><circle cx="1468.6" cy="948" r="12" fill="url(#icg)"/><rect x="1496.7" y="929.2" width="55.4" height="36.9" fill="url(#cb)"/><circle cx="1525.0" cy="948" r="12" fill="url(#icg)"/><rect x="1553.3" y="929.2" width="54.5" height="36.9" fill="url(#cb)"/><circle cx="1581.2" cy="948" r="12" fill="url(#icg)"/><rect x="1350" y="943" width="10" height="10" fill="#2e2e2e"/><path d="M1408.5,942 L1418.5,948 L1408.5,954 Z" fill="#2e2e2e"/><path d="M1464.3,943 H1462.3 V955 H1464.3 M1472.5,943 H1474.5 V955 H1472.5" fill="none" stroke="#2e2e2e" stroke-width="2"/><circle cx="1466.5" cy="948.3" r="1.15" fill="#2e2e2e"/><circle cx="1470.3" cy="948.3" r="1.15" fill="#2e2e2e"/><path d="M1525.3,948.2 C1523,944.6 1517.6,944.6 1517.6,948.2 C1517.6,951.8 1523,951.8 1525.3,948.2 C1527.6,944.6 1533,944.6 1533,948.2 C1533,951.8 1527.6,951.8 1525.3,948.2 Z" fill="none" stroke="#2e2e2e" stroke-width="2.1"/><path d="M1575,947 A6.2,6.2 0 0 1 1585.2,943.6 M1586.2,949.2 A6.2,6.2 0 0 1 1576,952.6" fill="none" stroke="#2e2e2e" stroke-width="2.4"/><path d="M1587.8,940.5 L1588.2,947.2 L1581.8,945.2 Z M1573.4,955.8 L1573,949 L1579.4,951 Z" fill="#2e2e2e"/><rect x="1326.3" y="968.2" width="169" height="40" fill="url(#cb)"/><rect x="1496.7" y="968.2" width="166.5" height="40" fill="url(#cb)"/><rect x="1663.2" y="929" width="5" height="77" fill="#1e1e1e"/><circle cx="1364.9" cy="987" r="12" fill="url(#icg)"/><circle cx="1631.9" cy="987" r="12" fill="url(#icg)"/><path d="M1364,981.5 L1359,987.3 L1364,993 M1369.5,981.5 L1364.5,987.3 L1369.5,993" fill="none" stroke="#333" stroke-width="1.9"/><path d="M1626.5,981.5 L1631.5,987.3 L1626.5,993 M1632,981.5 L1637,987.3 L1632,993" fill="none" stroke="#333" stroke-width="1.9"/><text x="1399" y="996.4" font-size="26" fill="#333" text-anchor="start" font-weight="bold" textLength="62.5" lengthAdjust="spacingAndGlyphs" >Back</text><text x="1532.4" y="996.4" font-size="26" fill="#333" text-anchor="start" font-weight="bold" textLength="64" lengthAdjust="spacingAndGlyphs" >Next</text><line x1="1636.0" y1="933.3" x2="1636.0" y2="961.7" stroke="#e81010" stroke-width="7" stroke-linecap="round"/><line x1="1648.3" y1="940.4" x2="1623.7" y2="954.6" stroke="#e81010" stroke-width="7" stroke-linecap="round"/><line x1="1648.3" y1="954.6" x2="1623.7" y2="940.4" stroke="#e81010" stroke-width="7" stroke-linecap="round"/></svg><div style="position:absolute;left:1018.5px;top:120.5px;width:638px;height:490.5px;clip-path:polygon(273.0px 476.0px, 272.0px 475.9px, 270.7px 475.8px, 269.5px 475.5px, 269.3px 475.3px, 269.4px 475.0px, 267.8px 473.5px, 263.4px 470.2px, 257.4px 465.9px, 251.5px 461.5px, 246.3px 457.5px, 241.2px 453.5px, 236.2px 449.5px, 231.3px 445.5px, 226.4px 441.5px, 221.7px 437.5px, 217.1px 433.5px, 212.5px 429.5px, 208.1px 425.5px, 203.7px 421.5px, 199.5px 417.5px, 195.3px 413.5px, 191.2px 409.5px, 187.2px 405.5px, 183.3px 401.5px, 179.4px 397.5px, 175.6px 393.5px, 171.9px 389.5px, 168.3px 385.5px, 164.8px 381.5px, 161.3px 377.5px, 157.9px 373.5px, 154.6px 369.5px, 151.3px 365.5px, 148.1px 361.5px, 145.0px 357.5px, 141.9px 353.5px, 138.9px 349.5px, 135.9px 345.5px, 133.0px 341.5px, 130.1px 337.5px, 127.4px 333.5px, 124.6px 329.5px, 121.9px 325.5px, 119.2px 321.5px, 116.6px 317.5px, 114.1px 313.5px, 111.6px 309.5px, 109.1px 305.5px, 106.7px 301.5px, 104.3px 297.5px, 101.9px 293.5px, 99.6px 289.5px, 97.3px 285.5px, 95.1px 281.5px, 92.9px 277.5px, 90.7px 273.5px, 88.5px 269.5px, 86.4px 265.5px, 84.3px 261.5px, 82.2px 257.5px, 80.1px 253.5px, 78.1px 249.5px, 76.1px 245.5px, 74.1px 241.5px, 72.1px 237.5px, 70.1px 233.5px, 68.1px 229.5px, 66.1px 225.5px, 64.1px 221.5px, 63.0px 219.2px, 61.9px 216.8px, 58.3px 209.5px, 49.9px 193.5px, 38.9px 172.6px, 29.3px 152.6px, 22.3px 135.6px, 16.7px 119.6px, 11.9px 105.0px, 8.1px 91.9px, 5.2px 80.1px, 3.0px 69.6px, 1.6px 60.3px, 0.9px 52.2px, 0.8px 44.9px, 1.4px 38.5px, 2.5px 32.9px, 4.2px 28.0px, 6.5px 23.8px, 9.2px 20.2px, 12.4px 17.3px, 15.9px 14.9px, 19.8px 13.2px, 23.9px 11.8px, 28.3px 10.8px, 32.9px 10.2px, 37.6px 9.8px, 42.5px 9.4px, 47.5px 9.3px, 52.6px 9.3px, 57.6px 9.2px, 62.6px 9.3px, 67.7px 9.4px, 72.9px 9.6px, 78.2px 9.9px, 83.6px 10.2px, 89.1px 10.5px, 94.8px 10.9px, 100.7px 11.4px, 106.7px 11.9px, 112.8px 12.5px, 119.2px 13.1px, 125.8px 13.7px, 132.6px 14.4px, 139.6px 15.1px, 146.9px 15.9px, 154.4px 16.7px, 162.2px 17.6px, 170.3px 18.5px, 178.6px 19.4px, 187.2px 20.4px, 196.1px 21.4px, 205.3px 22.4px, 214.8px 23.5px, 224.7px 24.6px, 234.8px 25.8px, 245.2px 27.0px, 256.0px 28.2px, 267.1px 29.5px, 278.4px 30.8px, 290.1px 32.1px, 302.0px 33.5px, 314.2px 34.9px, 326.6px 36.3px, 339.2px 37.8px, 352.0px 39.3px, 364.9px 40.7px, 378.0px 42.3px, 390.9px 43.7px, 403.6px 45.2px, 416.2px 46.7px, 428.6px 48.1px, 441.1px 49.5px, 453.4px 50.9px, 465.3px 52.3px, 476.8px 53.6px, 487.8px 54.9px, 498.4px 56.1px, 508.7px 57.3px, 518.5px 58.4px, 527.8px 59.5px, 536.6px 60.5px, 544.9px 61.4px, 552.8px 62.4px, 560.2px 63.2px, 567.2px 64.0px, 573.8px 64.8px, 580.0px 65.5px, 585.8px 66.1px, 591.4px 66.8px, 596.8px 67.4px, 601.9px 68.0px, 606.7px 68.5px, 611.3px 69.1px, 615.6px 69.6px, 619.6px 70.0px, 623.4px 70.5px, 627.0px 70.9px, 630.2px 71.3px, 633.0px 71.6px, 635.4px 71.8px, 638.2px 72.2px, 641.8px 72.6px, 645.7px 73.0px, 649.2px 73.4px, 652.1px 73.8px, 654.6px 74.1px, 656.9px 74.3px, 659.1px 74.6px, 661.2px 74.8px, 662.6px 75.0px);background:conic-gradient(from 0deg at 209.8px 107.7px, rgb(142,158,0) 0.0deg, rgb(158,158,0) 5.4deg, rgb(158,118,0) 29.7deg, rgb(158,84,0) 47.7deg, rgb(158,56,0) 59.3deg, rgb(158,34,0) 66.9deg, rgb(158,18,0) 72.0deg, rgb(158,7,0) 75.7deg, rgb(158,2,0) 78.5deg, rgb(158,0,0) 80.6deg, rgb(153,0,40) 99.5deg, rgb(149,0,90) 120.0deg, rgb(128,0,128) 140.0deg, rgb(80,0,144) 160.0deg, rgb(40,0,160) 178.0deg, rgb(0,2,158) 188.4deg, rgb(0,7,158) 192.3deg, rgb(0,18,158) 197.3deg, rgb(0,34,158) 204.2deg, rgb(0,56,158) 213.6deg, rgb(0,84,158) 226.3deg, rgb(0,118,158) 242.5deg, rgb(0,158,158) 260.6deg, rgb(0,158,118) 268.2deg, rgb(0,158,84) 275.3deg, rgb(0,158,56) 281.8deg, rgb(0,158,34) 287.5deg, rgb(0,158,18) 292.5deg, rgb(0,158,7) 296.9deg, rgb(0,158,2) 300.7deg, rgb(0,158,0) 304.1deg, rgb(2,158,0) 307.3deg, rgb(7,158,0) 311.3deg, rgb(18,158,0) 316.3deg, rgb(34,158,0) 322.6deg, rgb(56,158,0) 330.5deg, rgb(84,158,0) 340.4deg, rgb(118,158,0) 352.2deg, rgb(142,158,0) 360.0deg);"><div style="position:absolute;left:0;top:0;width:638px;height:490.5px;clip-path:polygon(-132.5px -664.5px, 398.3px 1046.3px, -1601.7px 1046.3px, -2132.5px -664.5px);background:linear-gradient(180deg, #009a10 0px, #009a12 30px, #009a28 60px, #009840 80px, #00985a 100px, #009a72 115px, #009888 130px, #00728a 150px, #0052a0 190px, #0034a0 244px, #0018a0 299px, #000ca0 354px, #0808a0 490px);"></div></div><div style="position:absolute;left:1018.5px;top:120.5px;width:638px;height:490.5px;clip-path:polygon(478.8px 63.1px, 79.8px 19.8px, 186.0px 362.0px);background:conic-gradient(from 0deg at 209.8px 107.7px, rgb(228,255,0) 0.0deg, rgb(255,255,0) 5.4deg, rgb(255,190,0) 29.7deg, rgb(255,135,0) 47.7deg, rgb(255,91,0) 59.3deg, rgb(255,55,0) 66.9deg, rgb(255,29,0) 72.0deg, rgb(255,12,0) 75.7deg, rgb(255,3,0) 78.5deg, rgb(255,0,0) 80.6deg, rgb(255,0,3) 83.7deg, rgb(255,0,12) 87.4deg, rgb(255,0,29) 91.7deg, rgb(255,0,55) 96.6deg, rgb(255,0,91) 102.3deg, rgb(255,0,135) 108.8deg, rgb(255,0,190) 116.1deg, rgb(255,0,255) 124.1deg, rgb(190,0,255) 134.1deg, rgb(135,0,255) 144.1deg, rgb(91,0,255) 153.6deg, rgb(55,0,255) 162.1deg, rgb(29,0,255) 169.5deg, rgb(12,0,255) 175.7deg, rgb(3,0,255) 181.0deg, rgb(0,0,255) 185.4deg, rgb(0,3,255) 188.4deg, rgb(0,12,255) 192.3deg, rgb(0,29,255) 197.3deg, rgb(0,55,255) 204.2deg, rgb(0,91,255) 213.6deg, rgb(0,135,255) 226.3deg, rgb(0,190,255) 242.5deg, rgb(0,255,255) 260.6deg, rgb(0,255,190) 268.2deg, rgb(0,255,135) 275.3deg, rgb(0,255,91) 281.8deg, rgb(0,255,55) 287.5deg, rgb(0,255,29) 292.5deg, rgb(0,255,12) 296.9deg, rgb(0,255,3) 300.7deg, rgb(0,255,0) 304.1deg, rgb(3,255,0) 307.3deg, rgb(12,255,0) 311.3deg, rgb(29,255,0) 316.3deg, rgb(55,255,0) 322.6deg, rgb(91,255,0) 330.5deg, rgb(135,255,0) 340.4deg, rgb(190,255,0) 352.2deg, rgb(228,255,0) 360.0deg);"></div><svg width="1668" height="1006" viewBox="0 0 1668 1006" style="position:absolute;left:0;top:0;font-family:'Liberation Sans',sans-serif"><defs><linearGradient id="wo0" gradientUnits="userSpaceOnUse" x1="1228.29" y1="228.25" x2="1236.20" y2="155.27"><stop offset="0.0" stop-color="#fff" stop-opacity="1.000"/><stop offset="0.1" stop-color="#fff" stop-opacity="0.793"/><stop offset="0.2" stop-color="#fff" stop-opacity="0.612"/><stop offset="0.3" stop-color="#fff" stop-opacity="0.456"/><stop offset="0.4" stop-color="#fff" stop-opacity="0.325"/><stop offset="0.5" stop-color="#fff" stop-opacity="0.218"/><stop offset="0.6" stop-color="#fff" stop-opacity="0.133"/><stop offset="0.7" stop-color="#fff" stop-opacity="0.071"/><stop offset="0.8" stop-color="#fff" stop-opacity="0.029"/><stop offset="0.9" stop-color="#fff" stop-opacity="0.006"/><stop offset="1.0" stop-color="#fff" stop-opacity="0.000"/></linearGradient><linearGradient id="wo1" gradientUnits="userSpaceOnUse" x1="1228.29" y1="228.25" x2="1236.20" y2="155.27"><stop offset="0.0" stop-color="#fff" stop-opacity="1.000"/><stop offset="0.1" stop-color="#fff" stop-opacity="0.793"/><stop offset="0.2" stop-color="#fff" stop-opacity="0.612"/><stop offset="0.3" stop-color="#fff" stop-opacity="0.456"/><stop offset="0.4" stop-color="#fff" stop-opacity="0.325"/><stop offset="0.5" stop-color="#fff" stop-opacity="0.218"/><stop offset="0.6" stop-color="#fff" stop-opacity="0.133"/><stop offset="0.7" stop-color="#fff" stop-opacity="0.071"/><stop offset="0.8" stop-color="#fff" stop-opacity="0.029"/><stop offset="0.9" stop-color="#fff" stop-opacity="0.006"/><stop offset="1.0" stop-color="#fff" stop-opacity="0.000"/></linearGradient><linearGradient id="wo2" gradientUnits="userSpaceOnUse" x1="1228.29" y1="228.25" x2="1134.62" y2="257.31"><stop offset="0.0" stop-color="#fff" stop-opacity="1.000"/><stop offset="0.1" stop-color="#fff" stop-opacity="0.793"/><stop offset="0.2" stop-color="#fff" stop-opacity="0.612"/><stop offset="0.3" stop-color="#fff" stop-opacity="0.456"/><stop offset="0.4" stop-color="#fff" stop-opacity="0.325"/><stop offset="0.5" stop-color="#fff" stop-opacity="0.218"/><stop offset="0.6" stop-color="#fff" stop-opacity="0.133"/><stop offset="0.7" stop-color="#fff" stop-opacity="0.071"/><stop offset="0.8" stop-color="#fff" stop-opacity="0.029"/><stop offset="0.9" stop-color="#fff" stop-opacity="0.006"/><stop offset="1.0" stop-color="#fff" stop-opacity="0.000"/></linearGradient><linearGradient id="wo3" gradientUnits="userSpaceOnUse" x1="1228.29" y1="228.25" x2="1134.61" y2="257.31"><stop offset="0.0" stop-color="#fff" stop-opacity="1.000"/><stop offset="0.1" stop-color="#fff" stop-opacity="0.793"/><stop offset="0.2" stop-color="#fff" stop-opacity="0.612"/><stop offset="0.3" stop-color="#fff" stop-opacity="0.456"/><stop offset="0.4" stop-color="#fff" stop-opacity="0.325"/><stop offset="0.5" stop-color="#fff" stop-opacity="0.218"/><stop offset="0.6" stop-color="#fff" stop-opacity="0.133"/><stop offset="0.7" stop-color="#fff" stop-opacity="0.071"/><stop offset="0.8" stop-color="#fff" stop-opacity="0.029"/><stop offset="0.9" stop-color="#fff" stop-opacity="0.006"/><stop offset="1.0" stop-color="#fff" stop-opacity="0.000"/></linearGradient><linearGradient id="wo4" gradientUnits="userSpaceOnUse" x1="1228.29" y1="228.25" x2="1343.24" y2="340.93"><stop offset="0.0" stop-color="#fff" stop-opacity="1.000"/><stop offset="0.1" stop-color="#fff" stop-opacity="0.793"/><stop offset="0.2" stop-color="#fff" stop-opacity="0.612"/><stop offset="0.3" stop-color="#fff" stop-opacity="0.456"/><stop offset="0.4" stop-color="#fff" stop-opacity="0.325"/><stop offset="0.5" stop-color="#fff" stop-opacity="0.218"/><stop offset="0.6" stop-color="#fff" stop-opacity="0.133"/><stop offset="0.7" stop-color="#fff" stop-opacity="0.071"/><stop offset="0.8" stop-color="#fff" stop-opacity="0.029"/><stop offset="0.9" stop-color="#fff" stop-opacity="0.006"/><stop offset="1.0" stop-color="#fff" stop-opacity="0.000"/></linearGradient><linearGradient id="wo5" gradientUnits="userSpaceOnUse" x1="1228.29" y1="228.25" x2="1343.32" y2="340.87"><stop offset="0.0" stop-color="#fff" stop-opacity="1.000"/><stop offset="0.1" stop-color="#fff" stop-opacity="0.793"/><stop offset="0.2" stop-color="#fff" stop-opacity="0.612"/><stop offset="0.3" stop-color="#fff" stop-opacity="0.456"/><stop offset="0.4" stop-color="#fff" stop-opacity="0.325"/><stop offset="0.5" stop-color="#fff" stop-opacity="0.218"/><stop offset="0.6" stop-color="#fff" stop-opacity="0.133"/><stop offset="0.7" stop-color="#fff" stop-opacity="0.071"/><stop offset="0.8" stop-color="#fff" stop-opacity="0.029"/><stop offset="0.9" stop-color="#fff" stop-opacity="0.006"/><stop offset="1.0" stop-color="#fff" stop-opacity="0.000"/></linearGradient></defs><polygon shape-rendering="crispEdges" points="1228.29,228.25 1497.35,183.56 1235.15,155.16" fill="url(#wo0)"/><polygon shape-rendering="crispEdges" points="1228.29,228.25 1235.15,155.16 1098.32,140.32" fill="url(#wo1)"/><polygon shape-rendering="crispEdges" points="1228.29,228.25 1098.32,140.32 1130.63,244.46" fill="url(#wo2)"/><polygon shape-rendering="crispEdges" points="1228.29,228.25 1130.63,244.46 1204.47,482.48" fill="url(#wo3)"/><polygon shape-rendering="crispEdges" points="1228.29,228.25 1204.47,482.48 1363.82,319.93" fill="url(#wo4)"/><polygon shape-rendering="crispEdges" points="1228.29,228.25 1363.82,319.93 1497.35,183.56" fill="url(#wo5)"/></svg><canvas id="cie" width="638" height="490" style="position:absolute;left:1018.5px;top:120.5px;width:638px;height:490px"></canvas><script>(function(){var c=document.getElementById("cie");if(!c||!c.getContext)return;var g=c.getContext("2d");var W=638,H=490,M=[2.041588,-0.565007,-0.344731,-0.969244,1.875968,0.041555,0.013444,-0.118362,1.015175],MC=[2.457129,-0.901899,-0.398045,-0.969244,1.875968,0.041555,0.030972,-0.153933,1.032541],X0=1017.8,US=1064.0,Y0=611.8,VS=819.0,OX=1018.5,OY=120.5,GM=1.4;var im=g.createImageData(W,H),d=im.data;for(var j=0;j<H;j++){var v=(Y0-(OY+j+0.5))/VS;for(var i=0;i<W;i++){var u=(OX+i+0.5-X0)/US;var dd=6*u-16*v+12,x=9*u/dd,y=4*v/dd;if(y<=0)continue;var XX=x/y,ZZ=(1-x-y)/y;var r=M[0]*XX+M[1]+M[2]*ZZ,gg=M[3]*XX+M[4]+M[5]*ZZ,b=M[6]*XX+M[7]+M[8]*ZZ;if(r<0||gg<0||b<0)continue;r=Math.max(0,MC[0]*XX+MC[1]+MC[2]*ZZ);gg=Math.max(0,MC[3]*XX+MC[4]+MC[5]*ZZ);b=Math.max(0,MC[6]*XX+MC[7]+MC[8]*ZZ);var mx=Math.max(r,gg,b);var k=(j*W+i)*4;d[k]=255*Math.pow(r/mx,GM);d[k+1]=255*Math.pow(gg/mx,GM);d[k+2]=255*Math.pow(b/mx,GM);d[k+3]=255;}}g.putImageData(im,0,0);})();</script><div style="position:absolute;left:636.5px;top:677.5px;width:341px;height:198px;background:radial-gradient(ellipse 170px 130px at 133px 112px, rgba(255,255,255,1) 0%, rgba(255,255,255,0.55) 45%, rgba(255,255,255,0) 100%),conic-gradient(from 0deg at 133px 112px, #c4ffc4 0deg, #f4ffd0 30deg, #ffe8b0 60deg, #ffb8b8 95deg, #ff98c0 115deg, #ffb8ec 150deg, #f4c8ff 185deg, #c8c8ff 220deg, #a8d4ff 240deg, #a4f8ff 270deg, #88ffcc 312deg, #c4ffc4 360deg);box-shadow:0 0 0 1px #9a9a9a;"></div><canvas id="cxy" width="341" height="198" style="position:absolute;left:636.5px;top:677.5px;width:341px;height:198px"></canvas><script>(function(){var c=document.getElementById("cxy");if(!c||!c.getContext)return;var g=c.getContext("2d");var W=341,H=198,M=[3.240970,-1.537383,-0.498611,-0.969244,1.875968,0.041555,0.055630,-0.203977,1.056972],L=636.5,T=677.5,GM=1.15;var im=g.createImageData(W,H),d=im.data;for(var j=0;j<H;j++){var y=0.329-(T+j+0.5-776.5)/198*0.05;for(var i=0;i<W;i++){var x=0.3127+(L+i+0.5-807)/341*0.05;var XX=x/y,ZZ=(1-x-y)/y;var r=Math.max(0,M[0]*XX+M[1]+M[2]*ZZ),gg=Math.max(0,M[3]*XX+M[4]+M[5]*ZZ),b=Math.max(0,M[6]*XX+M[7]+M[8]*ZZ);var mx=Math.max(r,gg,b);var k=(j*W+i)*4;d[k]=255*Math.pow(r/mx,GM);d[k+1]=255*Math.pow(gg/mx,GM);d[k+2]=255*Math.pow(b/mx,GM);d[k+3]=255;}}g.putImageData(im,0,0);})();</script><svg width="1668" height="1006" viewBox="0 0 1668 1006" style="position:absolute;left:0;top:0;font-family:'Liberation Sans',sans-serif"><rect x="1018" y="120" width="639.5" height="491.5" fill="none" stroke="#a8a8a8" stroke-width="1.3"/><text x="1320" y="114" font-size="14" fill="#d6d6d6" text-anchor="middle" font-weight="normal" >CIE 1976 u'v'</text><line x1="1012" y1="611.5" x2="1018" y2="611.5" stroke="#bbb" stroke-width="1.5"/><text x="1011" y="616.5" font-size="14" fill="#d8d8d8" text-anchor="end" font-weight="normal" >0</text><line x1="1017.8" y1="611.5" x2="1017.8" y2="617" stroke="#bbb" stroke-width="1.5"/><text x="1017.8" y="633" font-size="14" fill="#d8d8d8" text-anchor="middle" font-weight="normal" >0</text><line x1="1012" y1="570.8" x2="1018" y2="570.8" stroke="#bbb" stroke-width="1.5"/><text x="1011" y="575.8" font-size="14" fill="#d8d8d8" text-anchor="end" font-weight="normal" >0,05</text><line x1="1071.0" y1="611.5" x2="1071.0" y2="617" stroke="#bbb" stroke-width="1.5"/><text x="1071.0" y="633" font-size="14" fill="#d8d8d8" text-anchor="middle" font-weight="normal" >0,05</text><line x1="1012" y1="529.9" x2="1018" y2="529.9" stroke="#bbb" stroke-width="1.5"/><text x="1011" y="534.9" font-size="14" fill="#d8d8d8" text-anchor="end" font-weight="normal" >0,1</text><line x1="1124.2" y1="611.5" x2="1124.2" y2="617" stroke="#bbb" stroke-width="1.5"/><text x="1124.2" y="633" font-size="14" fill="#d8d8d8" text-anchor="middle" font-weight="normal" >0,1</text><line x1="1012" y1="488.9" x2="1018" y2="488.9" stroke="#bbb" stroke-width="1.5"/><text x="1011" y="493.9" font-size="14" fill="#d8d8d8" text-anchor="end" font-weight="normal" >0,15</text><line x1="1177.4" y1="611.5" x2="1177.4" y2="617" stroke="#bbb" stroke-width="1.5"/><text x="1177.4" y="633" font-size="14" fill="#d8d8d8" text-anchor="middle" font-weight="normal" >0,15</text><line x1="1012" y1="448.0" x2="1018" y2="448.0" stroke="#bbb" stroke-width="1.5"/><text x="1011" y="453.0" font-size="14" fill="#d8d8d8" text-anchor="end" font-weight="normal" >0,2</text><line x1="1230.6" y1="611.5" x2="1230.6" y2="617" stroke="#bbb" stroke-width="1.5"/><text x="1230.6" y="633" font-size="14" fill="#d8d8d8" text-anchor="middle" font-weight="normal" >0,2</text><line x1="1012" y1="407.0" x2="1018" y2="407.0" stroke="#bbb" stroke-width="1.5"/><text x="1011" y="412.0" font-size="14" fill="#d8d8d8" text-anchor="end" font-weight="normal" >0,25</text><line x1="1283.8" y1="611.5" x2="1283.8" y2="617" stroke="#bbb" stroke-width="1.5"/><text x="1283.8" y="633" font-size="14" fill="#d8d8d8" text-anchor="middle" font-weight="normal" >0,25</text><line x1="1012" y1="366.1" x2="1018" y2="366.1" stroke="#bbb" stroke-width="1.5"/><text x="1011" y="371.1" font-size="14" fill="#d8d8d8" text-anchor="end" font-weight="normal" >0,3</text><line x1="1337.0" y1="611.5" x2="1337.0" y2="617" stroke="#bbb" stroke-width="1.5"/><text x="1337.0" y="633" font-size="14" fill="#d8d8d8" text-anchor="middle" font-weight="normal" >0,3</text><line x1="1012" y1="325.1" x2="1018" y2="325.1" stroke="#bbb" stroke-width="1.5"/><text x="1011" y="330.1" font-size="14" fill="#d8d8d8" text-anchor="end" font-weight="normal" >0,35</text><line x1="1390.2" y1="611.5" x2="1390.2" y2="617" stroke="#bbb" stroke-width="1.5"/><text x="1390.2" y="633" font-size="14" fill="#d8d8d8" text-anchor="middle" font-weight="normal" >0,35</text><line x1="1012" y1="284.2" x2="1018" y2="284.2" stroke="#bbb" stroke-width="1.5"/><text x="1011" y="289.2" font-size="14" fill="#d8d8d8" text-anchor="end" font-weight="normal" >0,4</text><line x1="1443.4" y1="611.5" x2="1443.4" y2="617" stroke="#bbb" stroke-width="1.5"/><text x="1443.4" y="633" font-size="14" fill="#d8d8d8" text-anchor="middle" font-weight="normal" >0,4</text><line x1="1012" y1="243.2" x2="1018" y2="243.2" stroke="#bbb" stroke-width="1.5"/><text x="1011" y="248.2" font-size="14" fill="#d8d8d8" text-anchor="end" font-weight="normal" >0,45</text><line x1="1496.6" y1="611.5" x2="1496.6" y2="617" stroke="#bbb" stroke-width="1.5"/><text x="1496.6" y="633" font-size="14" fill="#d8d8d8" text-anchor="middle" font-weight="normal" >0,45</text><line x1="1012" y1="202.3" x2="1018" y2="202.3" stroke="#bbb" stroke-width="1.5"/><text x="1011" y="207.3" font-size="14" fill="#d8d8d8" text-anchor="end" font-weight="normal" >0,5</text><line x1="1549.8" y1="611.5" x2="1549.8" y2="617" stroke="#bbb" stroke-width="1.5"/><text x="1549.8" y="633" font-size="14" fill="#d8d8d8" text-anchor="middle" font-weight="normal" >0,5</text><line x1="1012" y1="161.3" x2="1018" y2="161.3" stroke="#bbb" stroke-width="1.5"/><text x="1011" y="166.3" font-size="14" fill="#d8d8d8" text-anchor="end" font-weight="normal" >0,55</text><line x1="1603.0" y1="611.5" x2="1603.0" y2="617" stroke="#bbb" stroke-width="1.5"/><text x="1603.0" y="633" font-size="14" fill="#d8d8d8" text-anchor="middle" font-weight="normal" >0,55</text><rect x="1091.3" y="131.8" width="14" height="14" fill="none" stroke="#f0f0f0" stroke-width="2"/><rect x="1228.2" y="146.7" width="14" height="14" fill="none" stroke="#f0f0f0" stroke-width="2"/><rect x="1490.3" y="175.1" width="14" height="14" fill="none" stroke="#f0f0f0" stroke-width="2"/><rect x="1123.6" y="236.0" width="14" height="14" fill="none" stroke="#f0f0f0" stroke-width="2"/><rect x="1356.8" y="311.4" width="14" height="14" fill="none" stroke="#f0f0f0" stroke-width="2"/><rect x="1197.5" y="474.0" width="14" height="14" fill="none" stroke="#f0f0f0" stroke-width="2"/><rect x="1221.8" y="219.7" width="13" height="13" fill="none" stroke="#000" stroke-width="2.2"/><circle cx="1153.1" cy="150.5" r="4.3" fill="#00b400" stroke="#1a1a1a" stroke-width="1.3"/><circle cx="1232.8" cy="157.3" r="4.3" fill="#a8a800" stroke="#1a1a1a" stroke-width="1.3"/><circle cx="1497.0" cy="179.7" r="4.3" fill="#c00000" stroke="#1a1a1a" stroke-width="1.3"/><circle cx="1166.1" cy="240.2" r="4.3" fill="#20b0a8" stroke="#1a1a1a" stroke-width="1.3"/><circle cx="1333.4" cy="347.0" r="4.3" fill="#b000b0" stroke="#1a1a1a" stroke-width="1.3"/><circle cx="1200.7" cy="482.3" r="4.3" fill="#0000c8" stroke="#1a1a1a" stroke-width="1.3"/><circle cx="1225.7" cy="229.2" r="4.3" fill="#ffffff" stroke="#1a1a1a" stroke-width="1.3"/><rect x="1402" y="579.5" width="252.5" height="27" fill="#2c2c2c"/><text x="1403" y="600.5" font-size="18.5" fill="#f2f2f2" text-anchor="start" font-weight="normal" textLength="221" lengthAdjust="spacingAndGlyphs" stroke="#f2f2f2" stroke-width="0.25">Gamut Coverage:&#160; 73,3%</text><text x="806.5" y="672" font-size="14" fill="#d6d6d6" text-anchor="middle" font-weight="normal" >CIE 1931 xy</text><rect x="799.5" y="768.5" width="14" height="14" fill="none" stroke="#000" stroke-width="2.2"/><circle cx="764.5" cy="795" r="4.4" fill="#bbbbbb" stroke="#222" stroke-width="1.2"/><circle cx="763" cy="797" r="4.4" fill="#ffffff" stroke="#222" stroke-width="1.2"/></svg></body></html>
